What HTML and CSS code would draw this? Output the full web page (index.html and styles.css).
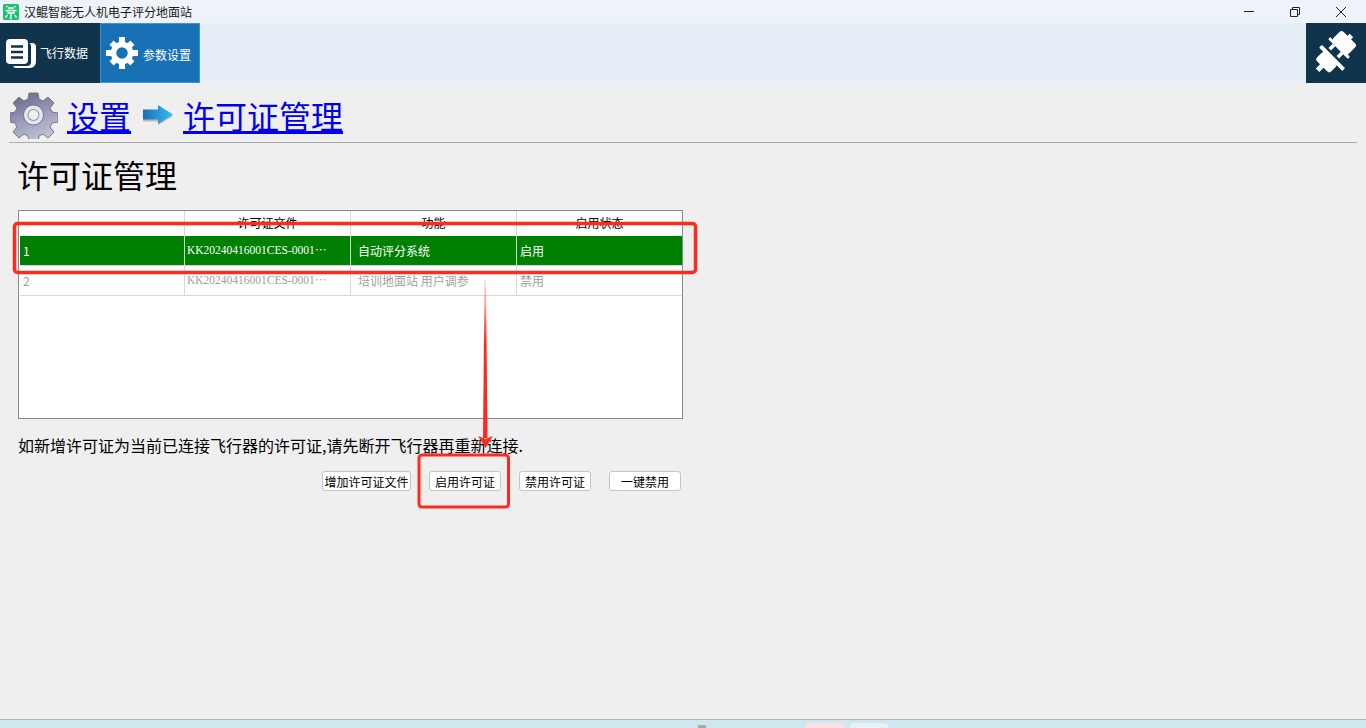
FILE: index.html
```html
<!DOCTYPE html>
<html lang="zh-CN">
<head>
    <meta charset="UTF-8">
    <title>汉鲲智能无人机电子评分地面站</title>
    <link rel="stylesheet" href="styles.css">
</head>
<body>
    <div class="titlebar">
        <svg class="app-icon" width="16" height="16" viewBox="0 0 16 16">
            <rect width="16" height="16" rx="1.5" fill="#19c46b"/>
            <path d="M3 2.500h1.500M11.500 2.500H13M5 4h6M2.500 6.500h11M5 6.500v2.500h6V6.500M8 9v5.500L6.500 14M4.500 11l-2 2.500M11.500 11l2 2.500" stroke="#fff" stroke-width="1.300" fill="none"/>
        </svg>
        <span class="app-title">汉鲲智能无人机电子评分地面站</span>
        <div class="win-buttons">
            <svg width="12" height="12" viewBox="0 0 12 12"><path d="M1 5.500h10" stroke="#222" stroke-width="1"/></svg>
            <svg width="12" height="12" viewBox="0 0 12 12"><path d="M1.500 3.500h7v7h-7zM3.500 3.500V1.500h7v7H8.500" stroke="#222" stroke-width="1" fill="none"/></svg>
            <svg width="12" height="12" viewBox="0 0 12 12"><path d="M1 1l10 10M11 1L1 11" stroke="#222" stroke-width="1"/></svg>
        </div>
    </div>

    <div class="toolbar">
        <div class="tool-tab">
            <svg width="30" height="30" viewBox="0 0 30 30">
                <path d="M23 5h3a4 4 0 0 1 4 4v15a6 6 0 0 1-6 6H10a4 4 0 0 1-3-2h14a4 4 0 0 0 4-4V8a3 3 0 0 0-2-3z" fill="#fff"/>
                <path d="M4 1h14a4 4 0 0 1 4 4v17a4 4 0 0 1-4 4H4a4 4 0 0 1-4-4V5a4 4 0 0 1 4-4z" fill="#fff"/>
                <path d="M5 8.500h12M5 14h12M5 19.500h12" stroke="#10344c" stroke-width="2.500"/>
            </svg>
            <span>飞行数据</span>
        </div>
        <div class="tool-tab active">
            <svg width="32" height="32" viewBox="0 0 32 32">
                <circle cx="16" cy="16" r="8.500" fill="none" stroke="#fff" stroke-width="5.500"/>
                <path d="M13 0h6v6h-6zM13 26h6v6h-6zM0 13h6v6H0zM26 13h6v6h-6zM3.500 7.700l4.200-4.200 4 4-4.200 4.200zM24.300 3.500l4.200 4.200-4 4-4.200-4.200zM3.500 24.300l4.200 4.200 4-4-4.200-4.200zM28.500 24.300l-4.200 4.200-4-4 4.200-4.200z" fill="#fff"/>
            </svg>
            <span>参数设置</span>
        </div>
        <div class="plug-box">
            <svg width="60" height="60" viewBox="0 0 60 60" fill="#fff">
                <g transform="translate(32 26) rotate(45)">
                    <rect x="-14" y="-3" width="28" height="3" rx="1"/>
                    <rect x="-11" y="-16" width="22" height="14" rx="3"/>
                    <rect x="-2.500" y="-19" width="5" height="5"/>
                    <rect x="-7.500" y="0" width="3.500" height="6"/>
                    <rect x="4" y="0" width="3.500" height="6"/>
                </g>
                <g transform="translate(27.500 33.500) rotate(45)">
                    <rect x="-16.500" y="0" width="33" height="4" rx="1"/>
                    <rect x="-11" y="3" width="20" height="12" rx="3"/>
                    <rect x="-4" y="14" width="5" height="7"/>
                </g>
            </svg>
        </div>
    </div>

    <div class="content">
        <div class="crumbs">
            <svg class="crumb-gear" width="48" height="48" viewBox="0 0 48 48">
                <defs>
                    <linearGradient id="gearFill" x1="0.300" y1="0" x2="0.700" y2="1">
                        <stop offset="0" stop-color="#666d8d"/>
                        <stop offset="0.500" stop-color="#9a9dbd"/>
                        <stop offset="1" stop-color="#c9c9d8"/>
                    </linearGradient>
                </defs>
                <path d="M19 2h9l1 6 4 2 5-4 6 6-4 5 2 4 6 1v9l-6 1-2 4 4 5-6 6-5-4-4 2-1 6h-9l-1-6-4-2-5 4-6-6 4-5-2-4-5-1v-9l5-1 2-4-4-5 6-6 5 4 4-2z" fill="url(#gearFill)" stroke="#777" stroke-width="1"/>
                <circle cx="23.500" cy="24" r="10" fill="#e6e8ee" stroke="#777790"/>
                <circle cx="23.500" cy="24" r="6" fill="#8b8ea5"/>
                <circle cx="23.500" cy="24" r="5" fill="#efefef"/>
            </svg>
            <a class="crumb-link" href="#">设置</a>
            <svg class="crumb-arrow" width="32" height="20" viewBox="0 0 32 20">
                <defs>
                    <linearGradient id="arrowFill" x1="0" y1="0" x2="1" y2="0">
                        <stop offset="0" stop-color="#1b6fb0"/>
                        <stop offset="1" stop-color="#36bdf7"/>
                    </linearGradient>
                </defs>
                <path d="M1 15.500h15V19l15-9L16 1v4H1z" fill="#bbb" transform="translate(0 1)"/>
                <path d="M1 14.500h15V19l15-9.500L16 0v4.500H1z" fill="url(#arrowFill)"/>
            </svg>
            <a class="crumb-link" href="#">许可证管理</a>
        </div>
        <div class="divider"></div>

        <h1>许可证管理</h1>

        <div class="license-table">
            <div class="row head">
                <div></div>
                <div class="center">许可证文件</div>
                <div class="center">功能</div>
                <div class="center">启用状态</div>
            </div>
            <div class="row selected">
                <div>1</div>
                <div class="file">KK20240416001CES-0001⋯</div>
                <div class="func">自动评分系统</div>
                <div>启用</div>
            </div>
            <div class="row disabled">
                <div>2</div>
                <div class="file">KK20240416001CES-0001⋯</div>
                <div class="func">培训地面站 用户调参</div>
                <div>禁用</div>
            </div>
        </div>

        <p class="note">如新增许可证为当前已连接飞行器的许可证,请先断开飞行器再重新连接.</p>

        <div class="actions">
            <button class="wide">增加许可证文件</button>
            <button>启用许可证</button>
            <button>禁用许可证</button>
            <button>一键禁用</button>
        </div>
    </div>

    <div class="statusbar">
        <span class="status-dots"></span>
        <span class="status-pink"></span>
        <span class="status-white"></span>
    </div>

    <svg class="marks" width="1366" height="728" viewBox="0 0 1366 728">
        <rect x="14.500" y="223.500" width="681" height="49" rx="3" fill="none" stroke="#ff2a1f" stroke-width="3.500"/>
        <rect x="419" y="455" width="89.500" height="52" rx="3" fill="none" stroke="#ff2a1f" stroke-width="3"/>
        <defs>
            <linearGradient id="arrowLine" x1="0" y1="0" x2="0" y2="1">
                <stop offset="0" stop-color="#ff2a1f" stop-opacity="0.150"/>
                <stop offset="0.400" stop-color="#ff2a1f"/>
            </linearGradient>
        </defs>
        <path d="M484.500 280h1.500l1.500 158h-4.500z" fill="url(#arrowLine)"/>
        <path d="M478 436l7.500 3 7.500-3-7.500 12z" fill="#ff2a1f"/>
    </svg>
</body>
</html>
```

FILE: styles.css
```css
/* General Styles */
body {
    position: relative;
    display: flex;
    flex-direction: column;
    height: 728px;
    margin: 0;
    overflow: hidden;
    background-color: #efefef;
    color: #000;
    font-family: "Noto Sans CJK SC", "Liberation Sans", sans-serif;
}

.titlebar {
    display: flex;
    align-items: center;
    height: 23px;
    padding-left: 3px;
    background: #edf3f9;
    font-size: 12px;
    color: #1a1a1a;
}

.app-icon {
    margin-right: 5px;
}

.win-buttons {
    display: flex;
    gap: 34px;
    margin-left: auto;
    padding-right: 19px;
}

.toolbar {
    display: flex;
    height: 60px;
    background: #e6eef7;
}

.tool-tab {
    display: flex;
    align-items: center;
    gap: 4px;
    box-sizing: border-box;
    width: 100px;
    padding-left: 6px;
    background: #10344c;
    color: #fff;
    font-size: 12px;
}

.tool-tab span {
    padding-bottom: 2px;
}

.tool-tab.active {
    gap: 5px;
    padding-left: 5px;
    background: #1870b5;
    border: 1px solid #3a96dc;
}

.tool-tab.active span {
    padding-top: 2px;
    padding-bottom: 0;
}

.plug-box {
    width: 60px;
    margin-left: auto;
    background: #10344c;
}

/* Page content */
.content {
    flex: 1;
    padding: 0 9px;
}

.crumbs {
    display: flex;
    align-items: center;
    box-sizing: border-box;
    height: 59px;
    padding: 4px 0 0 1px;
}

.crumb-link {
    color: #0000ee;
    font-size: 32px;
    line-height: 40px;
}

.crumb-gear {
    margin-right: 9px;
}

.crumb-arrow {
    margin: 0 9px 0 11px;
}

.divider {
    height: 1px;
    background: #aaa;
}

h1 {
    margin: 9px 0 14px 8px;
    font-size: 32px;
    font-weight: 400;
    line-height: 44px;
}

.license-table {
    box-sizing: border-box;
    width: 665px;
    height: 209px;
    margin-left: 9px;
    padding-left: 1px;
    background: #fff;
    border: 1px solid #8a8a92;
    font-size: 12px;
}

.row {
    display: grid;
    grid-template-columns: 165px 166px 166px 165px;
    height: 30px;
    line-height: 29px;
    border-bottom: 1px solid #d8d8d8;
    box-sizing: border-box;
}

.row > div {
    padding-left: 3px;
    border-right: 1px solid #d8d8d8;
    white-space: nowrap;
    overflow: hidden;
}

.row > div:last-child {
    border-right: none;
}

.row.head {
    height: 25px;
    border-bottom: none;
}

.row .center {
    padding-left: 0;
    text-align: center;
    line-height: 24px;
}

.row.selected {
    background: #008000;
    color: #fff;
    border-bottom: 1px solid #d8d8d8;
}

.row.disabled {
    color: #a0a0a0;
}

.row .file {
    padding-left: 2px;
    font-family: "Liberation Serif", serif;
    font-size: 11.500px;
}

.row .func {
    padding-left: 7px;
}

.note {
    margin: 15px 0 0 9px;
    font-size: 16px;
    line-height: 22px;
}

.actions {
    display: flex;
    justify-content: flex-end;
    gap: 18px;
    width: 663px;
    margin: 15px 0 0 9px;
}

.actions button {
    width: 72px;
    height: 20px;
    padding: 0;
    background: #fff;
    border: 1px solid #c4c4c4;
    border-radius: 3px;
    color: #000;
    font-family: inherit;
    font-size: 12px;
}

.actions button.wide {
    width: 89px;
}

/* Bottom strip */
.statusbar {
    position: relative;
    flex: 0 0 8px;
    background: #cfe8ef;
    border-top: 1px solid #a9b8bd;
}

.status-dots {
    position: absolute;
    left: 698px;
    top: 5px;
    width: 8px;
    height: 3px;
    background: #aaa;
}

.status-pink {
    position: absolute;
    left: 805px;
    top: 3px;
    width: 40px;
    height: 5px;
    background: #fbe0e2;
    border-radius: 4px 4px 0 0;
}

.status-white {
    position: absolute;
    left: 850px;
    top: 3px;
    width: 38px;
    height: 5px;
    background: #e8f1f5;
    border-radius: 4px 4px 0 0;
}

/* Red annotations drawn on the screenshot */
.marks {
    position: absolute;
    left: 0;
    top: 0;
    pointer-events: none;
}
```
